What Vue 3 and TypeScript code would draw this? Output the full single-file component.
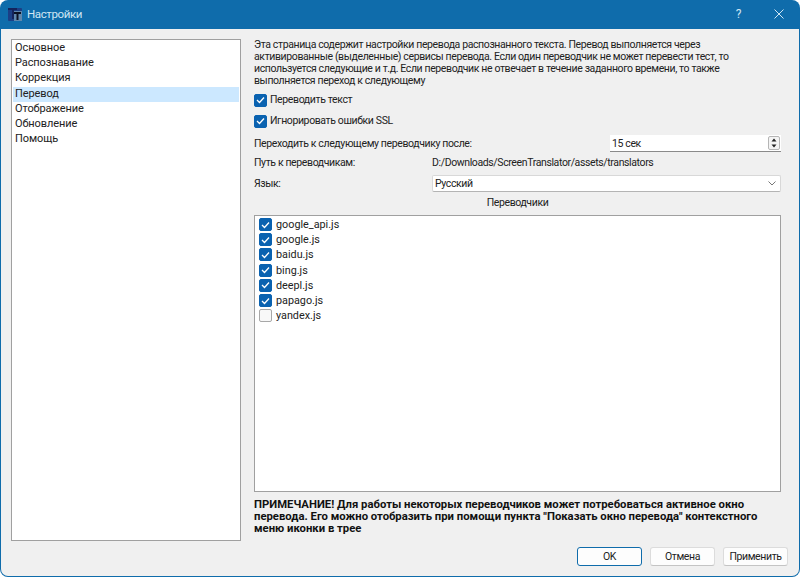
<script setup lang="ts">
const pages: string[] = ['Основное', 'Распознавание', 'Коррекция', 'Перевод', 'Отображение', 'Обновление', 'Помощь']
const translators: { name: string; on: boolean }[] = [
  { name: 'google_api.js', on: true },
  { name: 'google.js', on: true },
  { name: 'baidu.js', on: true },
  { name: 'bing.js', on: true },
  { name: 'deepl.js', on: true },
  { name: 'papago.js', on: true },
  { name: 'yandex.js', on: false },
]
</script>

<template>
  <div class="window">
    <header class="titlebar">
      <svg class="appicon" width="14" height="13" viewBox="0 0 14 13">
        <rect x="0" y="0" width="14" height="13" rx="1" fill="#1b3f86" />
        <path d="M0 0h9v2H6v9H4V2H0z" fill="#14245c" />
        <path d="M6 3h8v10H6z" fill="#5f87ad" />
        <path d="M6 4h7v2h-2.500v6h-2V6H6z" fill="#0c1224" />
      </svg>
      <span class="title">Настройки</span>
      <span class="help">?</span>
      <svg class="close" width="10" height="10" viewBox="0 0 10 10">
        <path d="M0.500 0.500l9 9M9.500 0.500l-9 9" stroke="#cfe6f3" stroke-width="1" fill="none" />
      </svg>
    </header>

    <main class="body">
      <div class="columns">
        <ul class="pages">
          <li v-for="p in pages" :key="p" :class="{ selected: p === 'Перевод' }">{{ p }}</li>
        </ul>

        <section class="panel">
          <p class="intro">Эта страница содержит настройки перевода распознанного текста. Перевод выполняется через<br>активированные (выделенные) сервисы перевода. Если один переводчик не может перевести тест, то<br>используется следующие и т.д. Если переводчик не отвечает в течение заданного времени, то также<br>выполняется переход к следующему</p>

          <label class="check first">
            <span class="box on"><svg width="9" height="8" viewBox="0 0 9 8"><path d="M1 4l2.500 2.500L8 1.500" stroke="#fff" stroke-width="1.300" fill="none" /></svg></span>
            Переводить текст
          </label>
          <label class="check second">
            <span class="box on"><svg width="9" height="8" viewBox="0 0 9 8"><path d="M1 4l2.500 2.500L8 1.500" stroke="#fff" stroke-width="1.300" fill="none" /></svg></span>
            Игнорировать ошибки SSL
          </label>

          <div class="row-spin">
            <span>Переходить к следующему переводчику после:</span>
            <div class="spin">
              <span>15 сек</span>
              <span class="arrows">
                <svg width="12" height="14" viewBox="0 0 12 14">
                  <rect x="0.500" y="0.500" width="11" height="13" rx="1.500" fill="#f4f4f4" stroke="#b5b5b5" />
                  <path d="M6 2.500l2.500 3h-5z" fill="#222" />
                  <path d="M6 11.500l2.500-3h-5z" fill="#222" />
                </svg>
              </span>
            </div>
          </div>

          <div class="row-path">
            <span>Путь к переводчикам:</span>
            <span>D:/Downloads/ScreenTranslator/assets/translators</span>
          </div>

          <div class="row-lang">
            <span>Язык:</span>
            <div class="combo">
              <span>Русский</span>
              <svg width="8" height="5" viewBox="0 0 8 5"><path d="M0.500 0.500L4 4l3.500-3.500" stroke="#777" fill="none" /></svg>
            </div>
          </div>

          <div class="caption">Переводчики</div>

          <ul class="translators">
            <li v-for="t in translators" :key="t.name">
              <span class="box" :class="{ on: t.on }">
                <svg v-if="t.on" width="9" height="8" viewBox="0 0 9 8"><path d="M1 4l2.500 2.500L8 1.500" stroke="#fff" stroke-width="1.300" fill="none" /></svg>
              </span>
              {{ t.name }}
            </li>
          </ul>

          <p class="note">ПРИМЕЧАНИЕ! Для работы некоторых переводчиков может потребоваться активное окно<br>перевода. Его можно отобразить при помощи пункта "Показать окно перевода" контекстного<br>меню иконки в трее</p>
        </section>
      </div>

      <footer class="buttons">
        <button class="primary">OK</button>
        <button>Отмена</button>
        <button>Применить</button>
      </footer>
    </main>
  </div>
</template>

<style>
html, body { margin: 0; background: #fff; }
</style>

<style scoped>
.window {
  width: 800px;
  height: 577px;
  box-sizing: border-box;
  display: flex;
  flex-direction: column;
  background: #0f6cab;
  border-radius: 8px;
  overflow: hidden;
  font-family: "Roboto", "Noto Sans", sans-serif;
  font-size: 10.500px;
  letter-spacing: -0.380px;
  color: #222;
}
.titlebar {
  height: 28px;
  flex: none;
  display: flex;
  align-items: center;
  padding: 0 16px 1px 8px;
  color: #cfe6f3;
}
.title { margin-left: 5px; font-size: 11.500px; flex: 1; }
.help { font-size: 12px; margin-right: 33px; }
.appicon { flex: none; }
.body {
  flex: 1;
  margin: 0 1px 1px;
  background: #f0f0f0;
  border-radius: 0 0 7px 7px;
  padding: 10px 11px 0 10px;
  display: flex;
  flex-direction: column;
  min-height: 0;
}
.columns { display: flex; gap: 13px; }
.pages {
  list-style: none;
  margin: 0;
  padding: 1px;
  width: 230px;
  height: 502px;
  box-sizing: border-box;
  background: #fff;
  border: 1px solid #a0a0a0;
  flex: none;
  font-size: 11px;
  letter-spacing: -0.100px;
}
.pages li {
  height: 15.200px;
  line-height: 14px;
  padding-left: 2px;
}
.pages li.selected { background: #cce8ff; }
.panel {
  width: 527px;
  display: flex;
  flex-direction: column;
  flex: none;
}
.intro { margin: 0; line-height: 12px; height: 48px; white-space: nowrap; }
.check { display: flex; align-items: center; gap: 3px; height: 14px; line-height: 14px; }
.first { margin-top: 6px; }
.second { margin-top: 7px; }
.box {
  width: 13px;
  height: 13px;
  box-sizing: border-box;
  border-radius: 2px;
  background: #f8f8f8;
  border: 1px solid #a8a8a8;
  display: inline-flex;
  align-items: center;
  justify-content: center;
  flex: none;
}
.box.on { background: #0a62b0; border-color: #0a62b0; }
.row-spin {
  display: flex;
  justify-content: space-between;
  align-items: center;
  height: 17px;
  margin-top: 7px;
}
.spin {
  width: 171px;
  height: 17px;
  box-sizing: border-box;
  background: #fff;
  border-bottom: 1px solid #8a8a8a;
  display: flex;
  align-items: center;
  justify-content: space-between;
  padding: 0 1px 0 2px;
}
.arrows { display: flex; }
.row-path {
  display: grid;
  grid-template-columns: 178px 1fr;
  height: 16px;
  line-height: 16px;
  margin-top: 3px;
}
.row-lang {
  display: grid;
  grid-template-columns: 178px 1fr;
  align-items: center;
  margin-top: 4px;
}
.combo {
  height: 17px;
  box-sizing: border-box;
  background: #fff;
  border: 1px solid #d8d8d8;
  border-bottom-color: #b4b4b4;
  border-radius: 2px;
  display: flex;
  align-items: center;
  justify-content: space-between;
  padding: 0 4px 0 2px;
}
.caption { text-align: center; height: 16px; line-height: 16px; margin-top: 3px; }
.translators {
  list-style: none;
  margin: 4px 0 0;
  padding: 1px 0 0 3.500px;
  height: 277px;
  box-sizing: border-box;
  background: #fff;
  border: 1px solid #a0a0a0;
  font-size: 10.800px;
  letter-spacing: 0;
}
.translators li {
  height: 15.200px;
  display: flex;
  align-items: center;
  gap: 4.500px;
  line-height: 15px;
}
.note {
  margin: 7px 0 0;
  font-weight: 700;
  line-height: 12px;
  font-size: 11.300px;
  letter-spacing: 0;
  white-space: nowrap;
  color: #111;
}
.buttons {
  display: flex;
  justify-content: flex-end;
  gap: 8px;
  margin-top: 6px;
}
button {
  width: 65px;
  height: 19px;
  box-sizing: border-box;
  padding: 0;
  background: #fdfdfd;
  border: 1px solid #dcdcdc;
  border-bottom-color: #c4c4c4;
  border-radius: 3px;
  font: inherit;
  letter-spacing: -0.380px;
  color: #222;
}
button.primary { border-color: #0f6cab; }
</style>
